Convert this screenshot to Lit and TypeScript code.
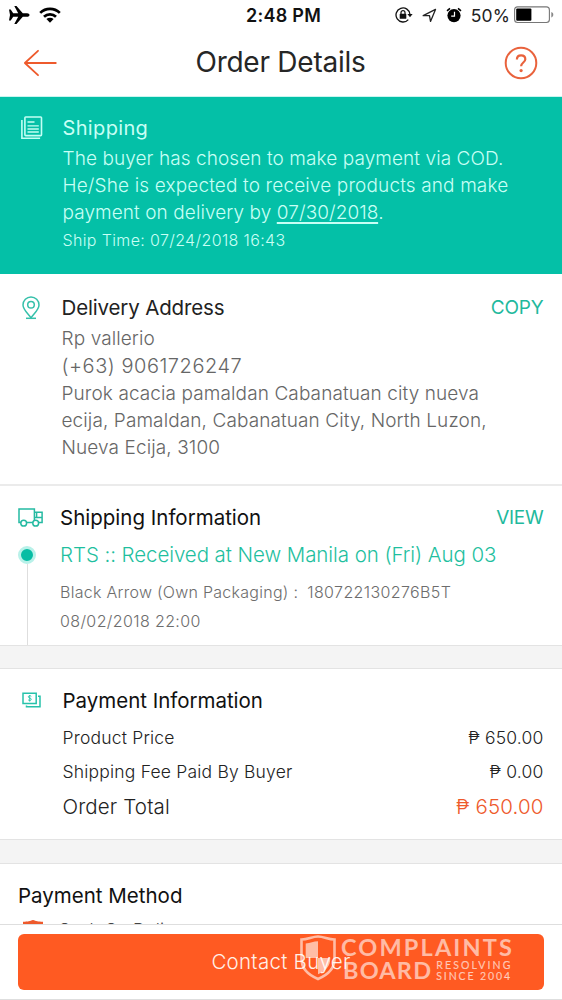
import { LitElement, html, css, svg } from "lit";
import { customElement } from "lit/decorators.js";

const airplane = svg`<svg width="21" height="20" viewBox="0 0 21 20"><path fill="#000" d="M0 4.400h1.700l2.500 3.800h5L5.300 1h2.200l6.300 7.200h4.300c1.300 0 2.400.8 2.400 1.800s-1.100 1.800-2.400 1.800h-4.300L7.500 19H5.300l3.900-7.200h-5L1.700 15.600H0l1-5.600z"/></svg>`;

const wifi = svg`<svg width="22" height="16" viewBox="0 0 22 16"><g fill="none" stroke="#000" stroke-width="2.700"><path d="M1.200 5.900a14 14 0 0 1 19.600 0"/><path d="M5 9.800a8.600 8.600 0 0 1 12 0"/></g><path fill="#000" d="M7.400 12.100a5.200 5.200 0 0 1 7.200 0L11 15.700z"/></svg>`;

const lock = svg`<svg width="18" height="16" viewBox="0 0 18 16"><path d="M13.300 12.600A7 7 0 1 1 15 7.500" fill="none" stroke="#111" stroke-width="1.300"/><path d="M12.400 7h5.200L15 10.300z" fill="#111"/><rect x="4.700" y="6.800" width="6.600" height="5" rx=".6" fill="#111"/><path d="M6 7V5.600a2 2 0 0 1 4 0V7" fill="none" stroke="#111" stroke-width="1.200"/></svg>`;

const locate = svg`<svg width="15" height="15" viewBox="0 0 15 15"><path d="M1.200 7.700 13.500 1.400 8.500 13.400 7.500 7.700z" fill="none" stroke="#222" stroke-width="1.300" stroke-linejoin="round"/></svg>`;

const alarm = svg`<svg width="16" height="16" viewBox="0 0 16 16"><circle cx="8" cy="8.600" r="6.600" fill="#000"/><path d="M1 3.800 4 1.300M15 3.800 12 1.300" stroke="#000" stroke-width="1.600"/><path d="M8.500 4.800v4.300H5.200" fill="none" stroke="#fff" stroke-width="1.200"/></svg>`;

const battery = svg`<svg width="40" height="18" viewBox="0 0 40 18"><rect x=".6" y=".9" width="34.800" height="15.600" rx="3" fill="none" stroke="#777" stroke-width="1.100"/><rect x="2.200" y="2.600" width="15.200" height="12.200" rx="1" fill="#000"/><path d="M37.300 6v5.400c1.400-.6 2-1.500 2-2.700s-.6-2.100-2-2.700z" fill="#888"/></svg>`;

const back = svg`<svg width="34" height="28" viewBox="0 0 34 28"><path d="M31.800 14H.9M14 1.800.9 14 14 26.200" fill="none" stroke="#ee5a2c" stroke-width="1.800" stroke-linecap="round" stroke-linejoin="round"/></svg>`;

const help = svg`<svg width="34" height="34" viewBox="0 0 34 34"><g fill="none" stroke="#e9623c"><circle cx="17" cy="17" r="15.300" stroke-width="2"/><path d="M12.900 13.500c0-2.600 1.700-4.200 4.200-4.200s4.200 1.600 4.200 3.900c0 3.300-4.200 3.300-4.200 7" stroke-width="2.200"/></g><circle cx="17.100" cy="24.600" r="1.600" fill="#e9623c"/></svg>`;

const order = svg`<svg width="23" height="24" viewBox="0 0 23 24"><g fill="none" stroke="#c2fff4" stroke-width="1.600"><rect x="3.900" y="1" width="16.600" height="18.600" rx=".8"/><path d="M.9 4v18.200h18.200"/><path d="M6.500 6h7M6.500 9.900h11.300M6.500 13h11.300M6.500 16h11.300" stroke-width="1.300"/></g></svg>`;

const pin = svg`<svg width="18" height="24" viewBox="0 0 18 24"><g fill="none" stroke="#35c0aa" stroke-width="1.500"><path d="M9 21.800C6.500 18 1 13.600 1 8.900a8 8 0 0 1 16 0c0 4.700-5.500 9.100-8 12.900z"/><circle cx="9" cy="8.700" r="3.300"/><path d="M4 22.300h10"/></g></svg>`;

const truck = svg`<svg width="26" height="19" viewBox="0 0 26 19"><g fill="none" stroke="#25baa2" stroke-width="1.500"><path d="M3.200 14.600H1V1h15.400v13.600H8.200M16.400 4.300h7.700v10.300h-3.500M16.400 9.500h7.700M18.600 9.500V4.300"/><circle cx="5.700" cy="15.200" r="2.900" fill="#fff"/><circle cx="17.700" cy="15.200" r="2.900" fill="#fff"/></g></svg>`;

const money = svg`<svg width="20" height="17" viewBox="0 0 20 17"><g fill="none" stroke="#27c2aa" stroke-width="1.500"><path d="M1 1.200h13.200v10.300H1zM16 4.200h2v10.600H4.500v-1.200"/><path d="M9.300 4.300c-.6-.8-3-.9-3 .5 0 1.600 3 .9 3 2.500 0 1.500-2.500 1.400-3.200.5M7.700 3v6.600" stroke-width=".9"/></g></svg>`;

const guarantee = svg`<svg width="20" height="22" viewBox="0 0 20 22"><path d="M0 1.700C5 1.700 7 1 10 0c3 1 5 1.700 10 1.700V11c0 5-4 8.500-10 11C4 19.500 0 16 0 11z" fill="#ee5a2c"/></svg>`;

const crest = svg`<svg width="36" height="46" viewBox="0 0 36 46"><path d="M1.500 4.500C8 4.500 12 1.500 18 1.500s10 3 16.500 3V24c0 10-7 16-16.500 20C8.500 40 1.500 34 1.500 24z" fill="none" stroke="currentColor" stroke-width="2.600"/><path d="M18 6.200V23H5.700V8.400C10.500 8.200 13.500 6.200 18 6.200zM18 23h12.300c0 8.500-4.700 13-12.300 16.300z" fill="currentColor"/></svg>`;

@customElement("app-root")
export class AppRoot extends LitElement {
  static styles = css`
    :host { display: flex; flex-direction: column; box-sizing: border-box; width: 562px; height: 1000px; overflow: hidden; background: #fff; color: #222; font-family: Inter, "Liberation Sans", sans-serif; }
    * { box-sizing: border-box; }
    svg { display: block; flex: none; }
    div, span { white-space: nowrap; }

    .status { display: grid; grid-template-columns: 1fr auto 1fr; align-items: center; height: 31px; padding: 0 8px 1px 9px; }
    .left { display: flex; align-items: center; gap: 9px; }
    .time { font-size: 18px; font-weight: 600; letter-spacing: .25px; color: #111; padding-left: 4px; }
    .right { display: flex; align-items: center; justify-content: flex-end; }
    .right .locate { margin-left: 9px; }
    .right .alarm { margin-left: 9px; }
    .percent { font-size: 17.5px; letter-spacing: .1px; margin: 0 4px 0 8.500px; color: #222; }

    .nav { display: grid; grid-template-columns: 34px 1fr 34px; align-items: center; height: 66px; padding: 0 24px 2px; border-bottom: 1px solid #c9f5ef; }
    .title { text-align: center; font-size: 28px; line-height: 34px; letter-spacing: -.25px; color: #262626; margin: -2px 0 0 -1px; }

    .section { display: flex; flex: none; }
    .icon { flex: none; }
    .body { flex: 1; }
    .row { display: flex; justify-content: space-between; padding-right: 18.500px; }
    .head { font-size: 20.5px; line-height: 27px; }
    .para { font-size: 19px; font-weight: 300; line-height: 27px; letter-spacing: .12px; }
    .small { font-size: 16px; font-weight: 300; line-height: 20px; letter-spacing: .42px; }
    .action { font-size: 19px; line-height: 27px; color: #1fb99d; letter-spacing: -.18px; }
    .view { letter-spacing: -.25px; }

    .notice { height: 177px; background: #04c0a7; color: #c8fff5; padding-top: 18px; }
    .notice .icon { width: 62.500px; padding: 1px 0 0 21px; }
    .notice .head { font-size: 20px; line-height: 26px; letter-spacing: .35px; margin-bottom: 4px; }
    .notice .para { letter-spacing: .08px; }
    .notice .wide { letter-spacing: .14px; }
    .notice .small { margin-top: 4px; letter-spacing: .36px; }
    .notice u { text-decoration-thickness: 1.500px; text-underline-offset: 3px; }

    .address { height: 212px; padding-top: 20px; border-bottom: 2px solid #ebebeb; }
    .address .icon { width: 61.500px; padding: 2px 0 0 22px; }
    .address .head { letter-spacing: -.15px; margin-bottom: 4px; }
    .address .para { color: #666; letter-spacing: .1px; }
    .phone { font-size: 20px; font-weight: 300; line-height: 28px; letter-spacing: .53px; color: #666; }

    .shipping { height: 160px; padding-top: 18px; border-bottom: 1px solid #e3e3e3; }
    .track { display: flex; flex-direction: column; flex: none; width: 60px; padding: 4px 0 0 17.500px; }
    .dot { flex: none; width: 18px; height: 18px; margin-top: 19px; border-radius: 50%; background: #06bda4; border: 3px solid #b9f1e9; }
    .line { flex: 1; width: 1.500px; margin-left: 9px; background: #dedede; }
    .shipping .head { color: #111; letter-spacing: 0; }
    .rts { font-size: 20.5px; font-weight: 300; line-height: 27px; letter-spacing: -.075px; color: #1fbf9f; margin: 10px 0 14px; }
    .shipping .small { color: #6d6d6d; letter-spacing: .38px; }
    .shipping .courier { display: flex; gap: 9px; letter-spacing: .27px; margin-bottom: 9px; }
    .number { letter-spacing: .38px; }

    .gap { flex: none; height: 23px; background: #f4f4f4; border-bottom: 1px solid #e3e3e3; }
    .gap.tall { height: 24px; }

    .payment { height: 171px; padding-top: 18px; border-bottom: 1px solid #e3e3e3; }
    .payment .icon { width: 62.500px; padding: 5px 0 0 22px; }
    .payment .head { color: #111; letter-spacing: -.02px; }
    .item { font-size: 17.5px; font-weight: 300; line-height: 21px; letter-spacing: .2px; margin-top: 13px; }
    .total { font-size: 20.5px; font-weight: 300; line-height: 27px; letter-spacing: .14px; margin-top: 11px; }
    .price { color: #ee5a2c; }

    .method { flex: 1; min-height: 0; overflow: hidden; padding: 18px 18px 0 18px; }
    .method .head { color: #111; letter-spacing: 0; }
    .choice { display: flex; padding: 11px 0 0 5px; }
    .cod { font-size: 17.5px; font-weight: 300; line-height: 21px; color: #444; margin: -1px 0 0 15px; }

    .footer { position: relative; flex: none; height: 76px; padding: 9px 18px 10px; border-top: 1px solid #dedede; border-bottom: 1px solid #dedede; }
    .button { height: 56px; border-radius: 6px; background: #ff5a22; color: #fff0e8; text-align: center; font-size: 20.5px; font-weight: 300; line-height: 55px; letter-spacing: .27px; }
    .mark { position: absolute; left: 300px; top: 10px; display: flex; gap: 5px; color: rgba(255,255,255,.6); font-family: Lato, sans-serif; }
    .words { padding-top: 1px; }
    .mark .name { font-size: 23.500px; font-weight: 700; line-height: 23px; letter-spacing: 2.150px; }
    .lower { display: flex; gap: 4px; }
    .mark .board { letter-spacing: 1.200px; padding-left: 2px; }
    .tag { padding-top: 1px; font-size: 10.500px; line-height: 11px; letter-spacing: 2.150px; -webkit-text-stroke: .2px currentColor; }
    .since { letter-spacing: 1.900px; }
  `;

  render() {
    return html`
      <div class="status">
        <div class="left">${airplane}${wifi}</div>
        <div class="time">2:48 PM</div>
        <div class="right">${lock}<span class="locate">${locate}</span><span class="alarm">${alarm}</span><span class="percent">50%</span>${battery}</div>
      </div>
      <div class="nav">${back}<div class="title">Order Details</div>${help}</div>

      <div class="section notice">
        <div class="icon">${order}</div>
        <div class="body">
          <div class="head">Shipping</div>
          <div class="para">The buyer has chosen to make payment via COD.</div>
          <div class="para wide">He/She is expected to receive products and make</div>
          <div class="para">payment on delivery by <u>07/30/2018</u>.</div>
          <div class="small">Ship Time: 07/24/2018 16:43</div>
        </div>
      </div>

      <div class="section address">
        <div class="icon">${pin}</div>
        <div class="body">
          <div class="row"><div class="head">Delivery Address</div><div class="action">COPY</div></div>
          <div class="para">Rp vallerio</div>
          <div class="phone">(+63) 9061726247</div>
          <div class="para">Purok acacia pamaldan Cabanatuan city nueva</div>
          <div class="para">ecija, Pamaldan, Cabanatuan City, North Luzon,</div>
          <div class="para">Nueva Ecija, 3100</div>
        </div>
      </div>

      <div class="section shipping">
        <div class="track">${truck}<div class="dot"></div><div class="line"></div></div>
        <div class="body">
          <div class="row"><div class="head">Shipping Information</div><div class="action view">VIEW</div></div>
          <div class="rts">RTS :: Received at New Manila on (Fri) Aug 03</div>
          <div class="small courier"><span>Black Arrow (Own Packaging) :</span><span class="number">180722130276B5T</span></div>
          <div class="small">08/02/2018 22:00</div>
        </div>
      </div>
      <div class="gap"></div>

      <div class="section payment">
        <div class="icon">${money}</div>
        <div class="body">
          <div class="head">Payment Information</div>
          <div class="row item"><span>Product Price</span><span>₱ 650.00</span></div>
          <div class="row item"><span>Shipping Fee Paid By Buyer</span><span>₱ 0.00</span></div>
          <div class="row total"><span>Order Total</span><span class="price">₱ 650.00</span></div>
        </div>
      </div>
      <div class="gap tall"></div>

      <div class="method">
        <div class="head">Payment Method</div>
        <div class="choice">${guarantee}<span class="cod">Cash On Delivery</span></div>
      </div>
      <div class="footer">
        <div class="button">Contact Buyer</div>
        <div class="mark">
          ${crest}
          <div class="words">
            <div class="name">COMPLAINTS</div>
            <div class="lower"><div class="name board">BOARD</div><div class="tag"><div>RESOLVING</div><div class="since">SINCE 2004</div></div></div>
          </div>
        </div>
      </div>
    `;
  }
}
